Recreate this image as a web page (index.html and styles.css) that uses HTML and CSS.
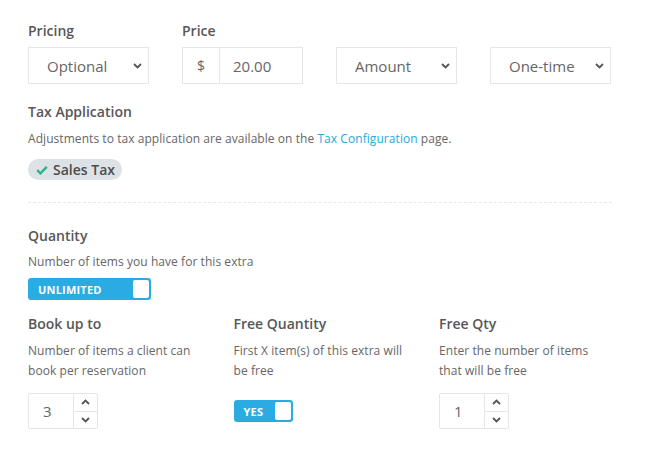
FILE: index.html
```html
<!DOCTYPE html>
<html>
<head>
<meta charset="utf-8">
<link rel="stylesheet" href="styles.css">
</head>
<body>
<div class="page">
  <div class="price-row">
    <div class="field">
      <div class="label">Pricing</div>
      <div class="select"><span>Optional</span><svg class="chev" width="9" height="6" viewBox="0 0 9 6"><path d="M1 1l3.5 3.5L8 1" fill="none" stroke="#555" stroke-width="1.8"/></svg></div>
    </div>
    <div class="field">
      <div class="label">Price</div>
      <div class="input-group"><div class="addon">$</div><div class="input">20.00</div></div>
    </div>
    <div class="field">
      <div class="label">&nbsp;</div>
      <div class="select"><span>Amount</span><svg class="chev" width="9" height="6" viewBox="0 0 9 6"><path d="M1 1l3.5 3.5L8 1" fill="none" stroke="#555" stroke-width="1.8"/></svg></div>
    </div>
    <div class="field">
      <div class="label">&nbsp;</div>
      <div class="select"><span>One-time</span><svg class="chev" width="9" height="6" viewBox="0 0 9 6"><path d="M1 1l3.5 3.5L8 1" fill="none" stroke="#555" stroke-width="1.8"/></svg></div>
    </div>
  </div>

  <div class="label tax-label">Tax Application</div>
  <p class="desc tax-desc">Adjustments to tax application are available on the <a class="link">Tax Configuration</a> page.</p>
  <div class="chip"><svg width="12" height="10" viewBox="0 0 12 10"><path d="M1.2 5.2l3.2 3.2L10.8 1.8" fill="none" stroke="#2fb18c" stroke-width="2.4"/></svg><span>Sales Tax</span></div>

  <div class="divider"></div>

  <div class="label">Quantity</div>
  <p class="desc q-desc">Number of items you have for this extra</p>
  <div class="toggle toggle-wide"><span>UNLIMITED</span><div class="knob"></div></div>

  <div class="qty-row">
    <div class="col">
      <div class="label">Book up to</div>
      <p class="desc col-desc">Number of items a client can book per reservation</p>
      <div class="control">
        <div class="spin"><div class="spin-val">3</div><div class="spin-btns"><div class="sb"><svg width="9" height="6" viewBox="0 0 9 6"><path d="M1 5l3.5-3.5L8 5" fill="none" stroke="#555" stroke-width="1.8"/></svg></div><div class="sb"><svg width="9" height="6" viewBox="0 0 9 6"><path d="M1 1l3.5 3.5L8 1" fill="none" stroke="#555" stroke-width="1.8"/></svg></div></div></div>
      </div>
    </div>
    <div class="col">
      <div class="label">Free Quantity</div>
      <p class="desc col-desc">First X item(s) of this extra will be free</p>
      <div class="control">
        <div class="toggle toggle-yes"><span>YES</span><div class="knob"></div></div>
      </div>
    </div>
    <div class="col">
      <div class="label">Free Qty</div>
      <p class="desc col-desc">Enter the number of items that will be free</p>
      <div class="control">
        <div class="spin"><div class="spin-val">1</div><div class="spin-btns"><div class="sb"><svg width="9" height="6" viewBox="0 0 9 6"><path d="M1 5l3.5-3.5L8 5" fill="none" stroke="#555" stroke-width="1.8"/></svg></div><div class="sb"><svg width="9" height="6" viewBox="0 0 9 6"><path d="M1 1l3.5 3.5L8 1" fill="none" stroke="#555" stroke-width="1.8"/></svg></div></div></div>
      </div>
    </div>
  </div>
</div>
</body>
</html>
```

FILE: styles.css
```css
* { box-sizing: border-box; }
html, body { margin: 0; padding: 0; background: #fff; }
body { font-family: "Open Sans", "Liberation Sans", sans-serif; color: #555; }
.page { width: 650px; height: 450px; padding: 21px 0 0 28px; }
.label { font-size: 14px; font-weight: 600; line-height: 20px; color: #575757; }
.desc { margin: 0; font-size: 12px; letter-spacing: 0.06px; line-height: 20px; color: #666; }
.price-row { display: grid; grid-template-columns: repeat(4, 121px); column-gap: 33px; }
.field .label { margin-bottom: 6px; }
.select { height: 37px; border: 1px solid #e6e6e6; display: flex; align-items: center; justify-content: space-between; padding: 0 6px 0 18px; font-size: 15px; color: #666; }
.select span { line-height: 20px; }
.input-group { height: 37px; display: flex; border: 1px solid #e6e6e6; }
.addon { width: 37px; border-right: 1px solid #e6e6e6; display: flex; align-items: center; justify-content: center; font-size: 14px; color: #666; }
.input { flex: 1; display: flex; align-items: center; padding-left: 13px; font-size: 15px; color: #666; }
.tax-label { margin-top: 18px; }
.tax-desc { margin-top: 7px; }
.link { color: #2aa8dc; text-decoration: none; }
.chip { margin-top: 10px; display: inline-flex; align-items: center; gap: 5px; height: 21px; padding: 0 7px 0 8px; border-radius: 11px; background: #dce2e5; font-size: 14px; font-weight: 600; color: #4d4d4d; }
.chip svg { margin-top: 1px; }
.divider { margin-top: 22px; width: 584px; border-top: 1px dashed #e9e9e9; margin-bottom: 23px; }
.q-desc { margin-top: 6px; }
.toggle { display: flex; align-items: center; justify-content: space-between; background: #2aabe2; border-radius: 3px; padding: 2px; color: #fff; font-weight: 700; font-size: 11px; }
.toggle span { padding-left: 8px; letter-spacing: 0.2px; }
.knob { width: 16px; height: 17px; background: #fff; border-radius: 2px; }
.toggle-wide { margin-top: 6px; width: 123px; height: 22px; }
.toggle-wide .knob { height: 18px; }
.toggle-yes { width: 59px; height: 22px; }
.toggle-yes .knob { height: 18px; }
.qty-row { margin-top: 14px; display: grid; grid-template-columns: repeat(3, 173px); column-gap: 32.5px; }
.col-desc { margin-top: 7px; }
.control { margin-top: 12px; height: 36px; display: flex; align-items: center; }
.spin { width: 70px; height: 36px; border: 1px solid #e6e6e6; border-radius: 2px; display: flex; }
.spin-val { flex: 1; display: flex; align-items: center; padding-left: 14px; font-size: 15px; color: #666; }
.spin-btns { width: 24px; border-left: 1px solid #e6e6e6; display: flex; flex-direction: column; }
.sb { flex: 1; display: flex; align-items: center; justify-content: center; }
.sb + .sb { border-top: 1px solid #e6e6e6; }
```
